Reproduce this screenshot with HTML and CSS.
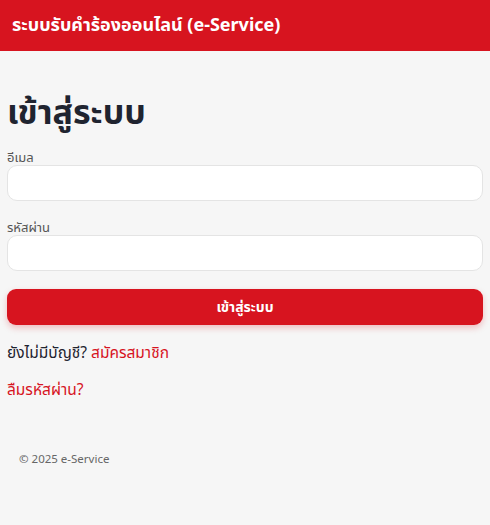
FILE: index.html
```html
<!DOCTYPE html>
<html lang="th">
<head>
<meta charset="utf-8">
<link rel="stylesheet" href="styles.css">
</head>
<body>
<header class="topbar">ระบบรับคำร้องออนไลน์ (e-Service)</header>
<main class="page">
  <h1 class="title">เข้าสู่ระบบ</h1>
  <form class="form">
    <label class="field">
      <span class="label">อีเมล</span>
      <input class="input" type="email">
    </label>
    <label class="field">
      <span class="label">รหัสผ่าน</span>
      <input class="input" type="password">
    </label>
    <button class="btn" type="button">เข้าสู่ระบบ</button>
  </form>
  <p class="line first">ยังไม่มีบัญชี? <a class="link" href="#">สมัครสมาชิก</a></p>
  <p class="line"><a class="link" href="#">ลืมรหัสผ่าน?</a></p>
  <footer class="footer">© 2025 e-Service</footer>
</main>
</body>
</html>
```
FILE: styles.css
```css
* { box-sizing: border-box; }
body {
  margin: 0;
  background: #f6f6f6;
  font-family: "Noto Sans", "Noto Sans Thai", sans-serif;
  color: #1f2430;
}
.topbar {
  background: #d7141f;
  color: #fff;
  font-weight: 700;
  font-size: 18px;
  height: 51px;
  padding: 0 12px;
  display: flex;
  align-items: center;
}
.page {
  padding: 0 7px;
}
.title {
  margin: 38px 0 16px;
  font-size: 34px;
  font-weight: 700;
  line-height: 44px;
}
.form {
  display: flex;
  flex-direction: column;
}
.field {
  display: flex;
  flex-direction: column;
  margin-bottom: 18px;
}
.label {
  font-size: 13px;
  color: #555;
  line-height: 16px;
}
.input {
  height: 36px;
  border: 1px solid #e4e4e4;
  border-radius: 10px;
  background: #fff;
  font: inherit;
}
.btn {
  height: 36px;
  border: 0;
  border-radius: 9px;
  background: #d7141f;
  color: #fff;
  font: inherit;
  font-size: 14px;
  font-weight: 700;
  box-shadow: 0 3px 6px rgba(215,20,31,0.25);
}
.line {
  margin: 13px 0 0;
  font-size: 15.5px;
  line-height: 24px;
}
.line.first {
  margin-top: 15px;
}
.link {
  color: #d7141f;
  text-decoration: none;
}
.footer {
  margin-top: 50px;
  padding: 0 12px;
  font-size: 11.5px;
  line-height: 16px;
  color: #666;
}
```
